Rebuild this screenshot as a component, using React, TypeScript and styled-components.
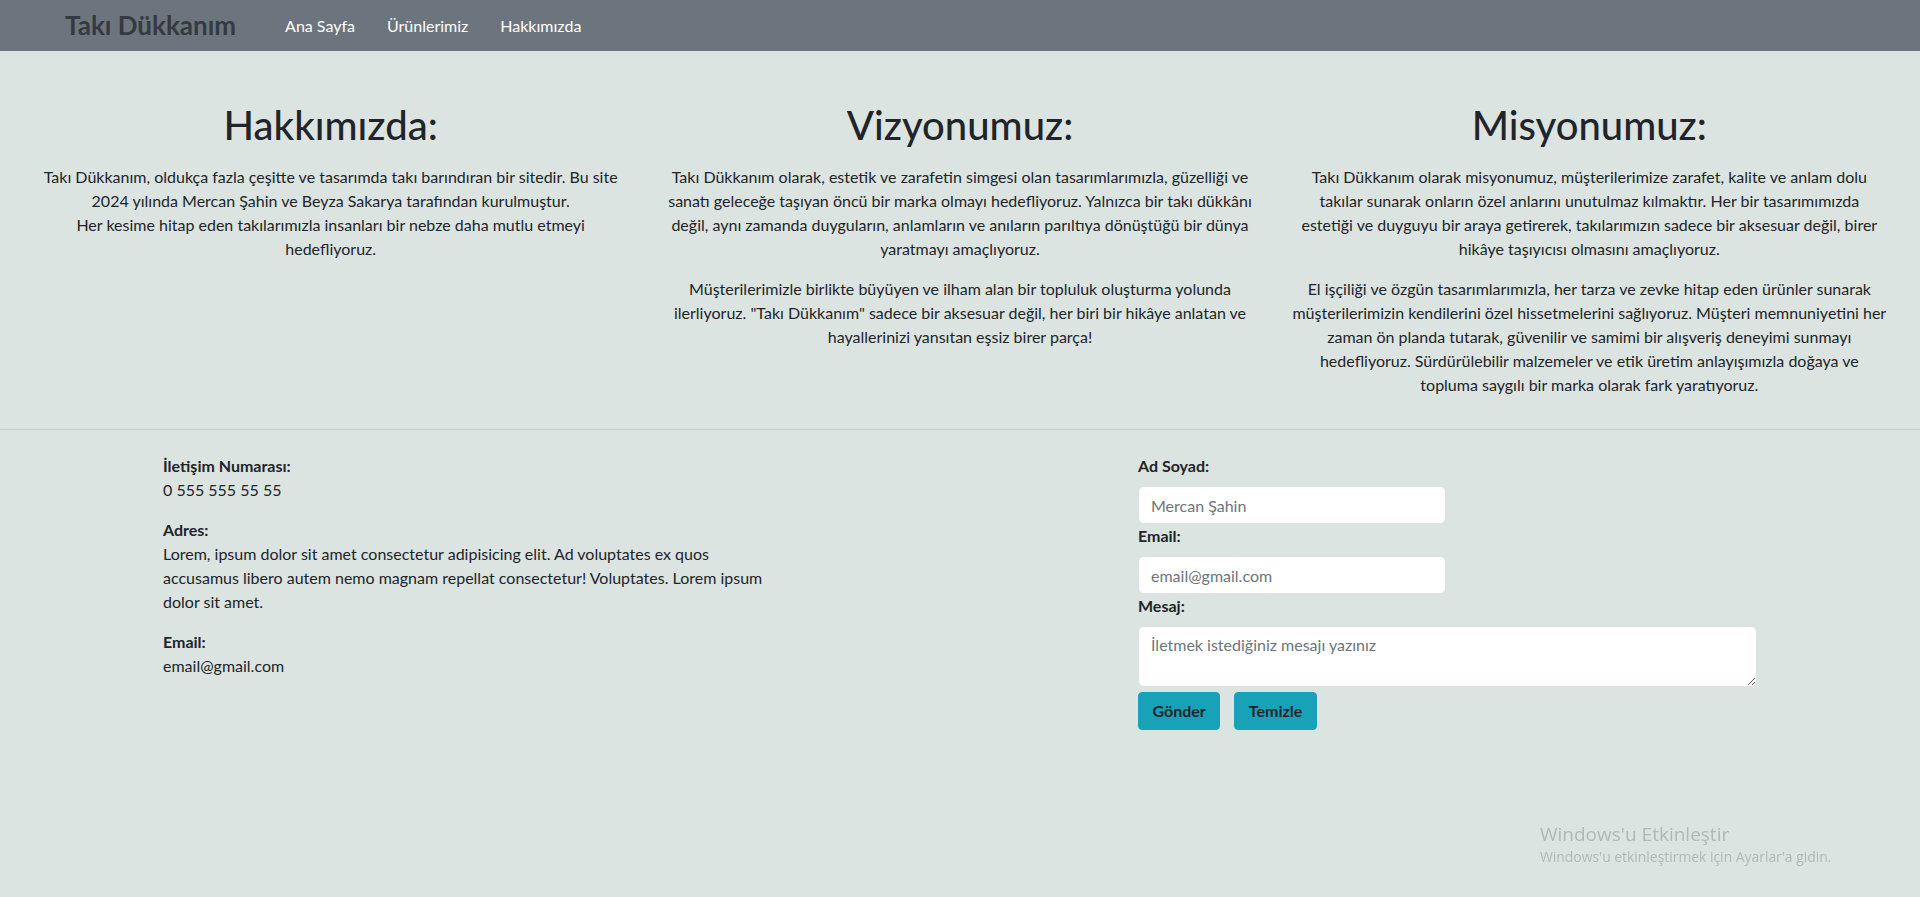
import styled, { createGlobalStyle } from "styled-components";

const GlobalStyle = createGlobalStyle`
  * {
    box-sizing: border-box;
  }
  body {
    margin: 0;
    background-color: #dce4e1;
    color: #212529;
    font-family: "Lato", "Open Sans", sans-serif;
    font-size: 16px;
    line-height: 1.5;
  }
`;

const Navbar = styled.nav`
  display: flex;
  align-items: center;
  height: 51px;
  padding-left: 65px;
  background-color: #6c757d;
`;

const Brand = styled.a`
  margin-right: 33px;
  font-size: 26px;
  font-weight: 700;
  color: #343a40;
  text-decoration: none;
`;

const NavList = styled.ul`
  display: flex;
  margin: 0;
  padding: 0;
  list-style: none;
`;

const NavLink = styled.a`
  display: block;
  padding: 0 16px;
  color: #fff;
  text-decoration: none;
`;

const About = styled.section`
  display: grid;
  grid-template-columns: repeat(3, 1fr);
  padding: 50px 16px 16px;
  border-bottom: 1px solid #c5cdca;
`;

const Column = styled.div`
  padding: 0 16.5px;
  text-align: center;
`;

const Heading = styled.h1`
  margin: 0 0 16px;
  font-size: 40px;
  font-weight: 500;
  line-height: 1.2;
`;

const Text = styled.p`
  margin: 0 0 16px;
`;

const Contact = styled.section`
  display: grid;
  grid-template-columns: 975px 619px;
  padding: 24px 0 0 163px;
`;

const InfoList = styled.div`
  width: 625px;
`;

const InfoBlock = styled.div`
  margin-bottom: 16px;
`;

const Label = styled.label`
  display: block;
  font-weight: 700;
`;

const Form = styled.form`
  display: flex;
  flex-direction: column;
  align-items: flex-start;
`;

const FormLabel = styled(Label)`
  margin-bottom: 8px;
`;

const Input = styled.input`
  width: 308px;
  height: 38px;
  padding: 6px 12px;
  font: inherit;
  color: #212529;
  background: #fff;
  border: 1px solid #dee2e6;
  border-radius: 6px;
  &::placeholder {
    color: #6c757d;
  }
`;

const TextArea = styled.textarea`
  width: 619px;
  height: 61px;
  padding: 6px 12px;
  font: inherit;
  color: #212529;
  background: #fff;
  border: 1px solid #dee2e6;
  border-radius: 6px;
  resize: vertical;
  &::placeholder {
    color: #6c757d;
  }
`;

const Buttons = styled.div`
  display: flex;
  gap: 14px;
  margin-top: 5px;
`;

const Button = styled.button`
  height: 38px;
  padding: 6px 13.5px;
  font: inherit;
  font-weight: 700;
  color: #212529;
  background-color: #17a2b8;
  border: 1px solid #17a2b8;
  border-radius: 4px;
  cursor: pointer;
`;

const Watermark = styled.div`
  position: fixed;
  left: 1540px;
  top: 821px;
  color: #b2b8b6;
  font-family: "Open Sans", sans-serif;
  pointer-events: none;
`;

const WatermarkTitle = styled.div`
  font-size: 19px;
  line-height: 26px;
`;

const WatermarkNote = styled.div`
  font-size: 13.9px;
  line-height: 20px;
`;

export default function App() {
  return (
    <>
      <GlobalStyle />
      <Navbar>
        <Brand href="#">Takı Dükkanım</Brand>
        <NavList>
          <li>
            <NavLink href="#">Ana Sayfa</NavLink>
          </li>
          <li>
            <NavLink href="#">Ürünlerimiz</NavLink>
          </li>
          <li>
            <NavLink href="#">Hakkımızda</NavLink>
          </li>
        </NavList>
      </Navbar>

      <About>
        <Column>
          <Heading>Hakkımızda:</Heading>
          <Text>
            Takı Dükkanım, oldukça fazla çeşitte ve tasarımda takı barındıran bir sitedir. Bu
            site 2024 yılında Mercan Şahin ve Beyza Sakarya tarafından kurulmuştur.
            <br />
            Her kesime hitap eden takılarımızla insanları bir nebze daha mutlu etmeyi
            <br />
            hedefliyoruz.
          </Text>
        </Column>
        <Column>
          <Heading>Vizyonumuz:</Heading>
          <Text>
            Takı Dükkanım olarak, estetik ve zarafetin simgesi olan tasarımlarımızla, güzelliği ve
            sanatı geleceğe taşıyan öncü bir marka olmayı hedefliyoruz. Yalnızca bir takı dükkânı
            değil, aynı zamanda duyguların, anlamların ve anıların parıltıya dönüştüğü bir dünya
            yaratmayı amaçlıyoruz.
          </Text>
          <Text>
            Müşterilerimizle birlikte büyüyen ve ilham alan bir topluluk oluşturma yolunda
            ilerliyoruz. "Takı Dükkanım" sadece bir aksesuar değil, her biri bir hikâye anlatan ve
            hayallerinizi yansıtan eşsiz birer parça!
          </Text>
        </Column>
        <Column>
          <Heading>Misyonumuz:</Heading>
          <Text>
            Takı Dükkanım olarak misyonumuz, müşterilerimize zarafet, kalite ve anlam dolu takılar
            sunarak onların özel anlarını unutulmaz kılmaktır. Her bir tasarımımızda
            <br />
            estetiği ve duyguyu bir araya getirerek, takılarımızın sadece bir aksesuar değil, birer
            <br />
            hikâye taşıyıcısı olmasını amaçlıyoruz.
          </Text>
          <Text>
            El işçiliği ve özgün tasarımlarımızla, her tarza ve zevke hitap eden ürünler sunarak
            müşterilerimizin kendilerini özel hissetmelerini sağlıyoruz. Müşteri memnuniyetini her
            zaman ön planda tutarak, güvenilir ve samimi bir alışveriş deneyimi sunmayı
            hedefliyoruz. Sürdürülebilir malzemeler ve etik üretim anlayışımızla doğaya ve topluma
            saygılı bir marka olarak fark yaratıyoruz.
          </Text>
        </Column>
      </About>

      <Contact>
        <InfoList>
          <InfoBlock>
            <Label>İletişim Numarası:</Label>
            0 555 555 55 55
          </InfoBlock>
          <InfoBlock>
            <Label>Adres:</Label>
            Lorem, ipsum dolor sit amet consectetur adipisicing elit. Ad voluptates ex quos
            accusamus libero autem nemo magnam repellat consectetur! Voluptates. Lorem ipsum dolor
            sit amet.
          </InfoBlock>
          <InfoBlock>
            <Label>Email:</Label>
            email@gmail.com
          </InfoBlock>
        </InfoList>

        <Form onSubmit={(e) => e.preventDefault()}>
          <FormLabel htmlFor="name">Ad Soyad:</FormLabel>
          <Input id="name" type="text" placeholder="Mercan Şahin" />
          <FormLabel htmlFor="email">Email:</FormLabel>
          <Input id="email" type="email" placeholder="email@gmail.com" />
          <FormLabel htmlFor="message">Mesaj:</FormLabel>
          <TextArea id="message" placeholder="İletmek istediğiniz mesajı yazınız" />
          <Buttons>
            <Button type="submit">Gönder</Button>
            <Button type="reset">Temizle</Button>
          </Buttons>
        </Form>
      </Contact>

      <Watermark>
        <WatermarkTitle>Windows'u Etkinleştir</WatermarkTitle>
        <WatermarkNote>Windows'u etkinleştirmek için Ayarlar'a gidin.</WatermarkNote>
      </Watermark>
    </>
  );
}
